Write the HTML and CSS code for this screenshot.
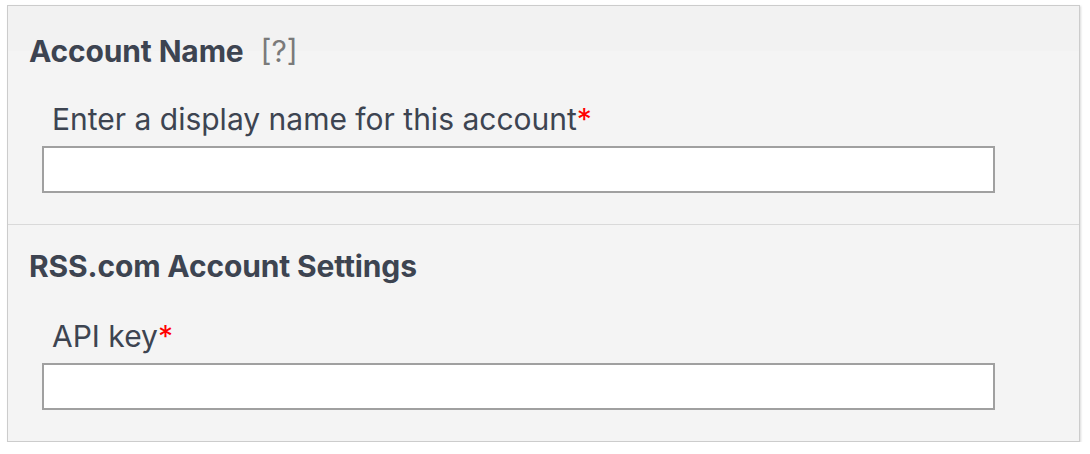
FILE: index.html
```html
<!DOCTYPE html>
<html lang="en">
<head>
    <meta charset="UTF-8">
    <title>Account Settings</title>
    <link rel="stylesheet" href="styles.css">
</head>
<body>
    <div class="panel">
        <div class="section section-first">
            <h3 class="section-title">Account Name <span class="help">[?]</span></h3>
            <div class="field">
                <label class="field-label" for="display-name">Enter a display name for this account<span class="req">*</span></label>
                <input class="field-input" id="display-name" type="text">
            </div>
        </div>
        <div class="section">
            <h3 class="section-title">RSS.com Account Settings</h3>
            <div class="field">
                <label class="field-label" for="api-key">API key<span class="req">*</span></label>
                <input class="field-input" id="api-key" type="text">
            </div>
        </div>
    </div>
</body>
</html>
```

FILE: styles.css
```css
body {
    margin: 0;
    font-family: Inter, 'Noto Sans', sans-serif;
    background-color: #ffffff;
    color: #3d4451;
}
.panel {
    margin: 5px 0 0 7px;
    width: 1071px;
    border: 1px solid #cccccc;
    background-color: #f4f4f4;
    box-shadow: 1px 1px 2px rgba(0, 0, 0, 0.15);
}
.section {
    padding: 23px 0 31px 21px;
}
.section .field {
    margin-top: 34px;
}
.section-first {
    padding-top: 27px;
    padding-bottom: 31px;
    border-bottom: 1px solid #d9d9d9;
    background: linear-gradient(#f2f2f2 0, #f2f2f2 45px, #f4f4f4 45px);
}
.section-first .field {
    margin-top: 32px;
}
.section-title {
    margin: 0;
    font-size: 30px;
    line-height: 36px;
    font-weight: 700;
    letter-spacing: -0.15px;
}
.help {
    margin-left: 10px;
    font-weight: 400;
    color: #7a7a7a;
    letter-spacing: 0;
}
.field {
    padding-left: 13px;
}
.field-label {
    display: block;
    padding-left: 10px;
    margin-bottom: 9px;
    font-size: 30px;
    line-height: 36px;
}
.req {
    color: #ff0000;
}
.field-input {
    display: block;
    box-sizing: border-box;
    width: 953px;
    height: 47px;
    margin: 0;
    border: 2px solid #a0a0a0;
    background-color: #ffffff;
}
```
